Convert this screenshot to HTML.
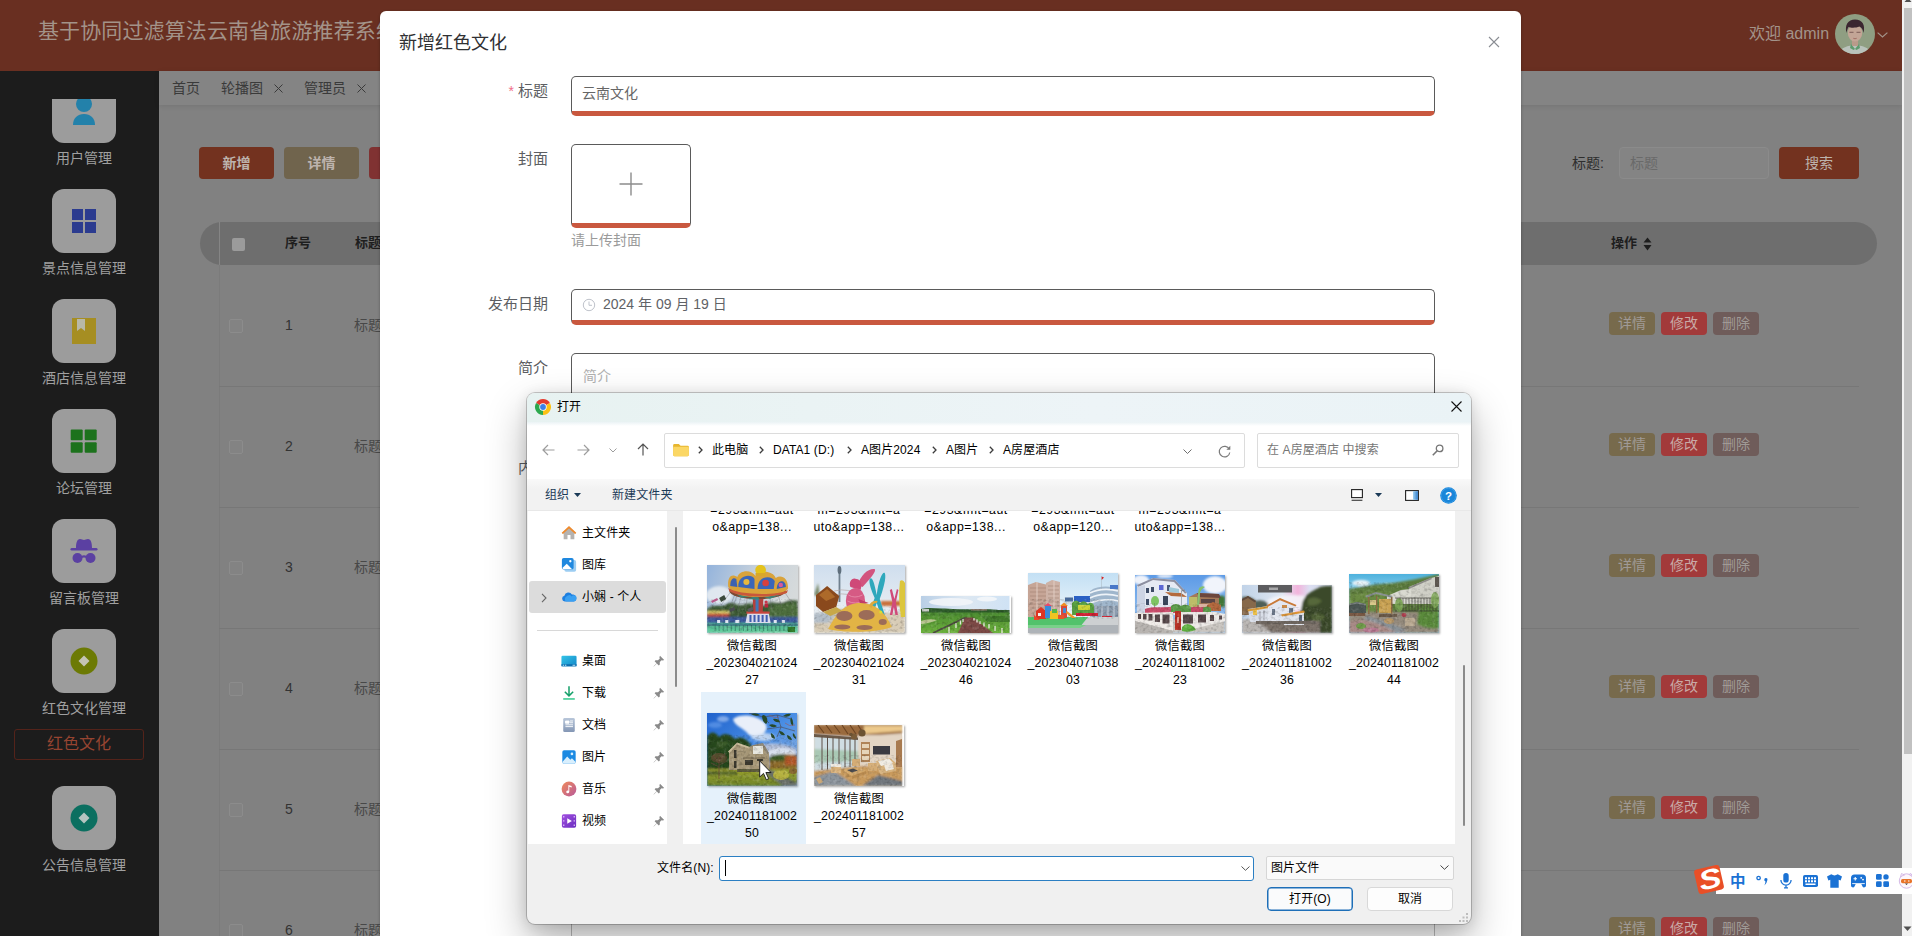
<!DOCTYPE html>
<html lang="zh-CN">
<head>
<meta charset="utf-8">
<title>基于协同过滤算法云南省旅游推荐系统</title>
<style>
*{box-sizing:border-box;margin:0;padding:0}
html,body{width:1912px;height:936px;overflow:hidden;background:#818181;font-family:"Liberation Sans","Noto Sans CJK SC",sans-serif;}
body{position:relative}
.a{position:absolute;white-space:nowrap}
svg{display:block;overflow:visible}
/* ===== page (under overlay) ===== */
#hdr{position:absolute;left:0;top:0;width:1902px;height:71px;background:#692f21;}
#hdr .ttl{position:absolute;left:38px;top:15px;font-size:21px;line-height:32px;color:#a39389;white-space:nowrap;letter-spacing:.12px}
#hdr .wel{position:absolute;left:1749px;top:20px;font-size:16px;line-height:28px;color:#a39389;white-space:nowrap}
#side{position:absolute;left:0;top:71px;width:159px;height:865px;background:#1c1c1c;}
#sidein{position:absolute;left:0;top:28px;width:158px;height:837px;overflow:hidden}
.bx{position:absolute;left:52px;width:64px;height:64px;border-radius:12px;background:#9c9c9c}
.bx svg{position:absolute;left:20px;top:20px;width:24px;height:24px}
.lb{position:absolute;left:0;width:168px;text-align:center;font-size:14px;line-height:22px;color:#a0a0a0;white-space:nowrap;margin-top:1px}
#tabs{position:absolute;left:159px;top:71px;width:1743px;height:34px;background:#848484;box-shadow:0 1px 5px rgba(0,0,0,.10)}
#tabs span{position:absolute;top:6px;font-size:14px;line-height:22px;color:#3a3a3a;white-space:nowrap}
.btn{position:absolute;height:32px;border-radius:4px;color:#bdb3ad;font-size:14px;line-height:32px;text-align:center;font-weight:bold;white-space:nowrap}
.thd{position:absolute;left:200px;top:222px;width:1677px;height:43px;border-radius:22px;background:#6e6e6e}
.thd b{position:absolute;top:11px;font-size:13px;line-height:20px;color:#1e1e1e;white-space:nowrap}
.row{position:absolute;left:219px;width:1640px;height:121px;border-bottom:1px solid #777}
.row i{position:absolute;left:10px;top:53px;width:14px;height:14px;border:1px solid #8c8c8c;border-radius:2px;background:#838383}
.row em{position:absolute;left:66px;top:48px;font-style:normal;font-size:14px;line-height:22px;color:#333}
.row u{position:absolute;left:135px;top:48px;text-decoration:none;font-size:14px;line-height:22px;color:#484848}
.row s{position:absolute;top:46px;width:46px;height:23px;border-radius:4px;text-decoration:none;font-size:14px;line-height:23px;text-align:center;color:#a09a96}
.row s.d{left:1390px;background:#776a4c}
.row s.m{left:1442px;background:#a23a3a;color:#c9a9a6}
.row s.x{left:1494px;background:#6f5c5a}
/* ===== el-dialog ===== */
#dlg{position:absolute;left:380px;top:11px;width:1141px;height:940px;background:#fff;border-radius:6px;box-shadow:0 1px 3px rgba(0,0,0,.3)}
#dlg .t{position:absolute;left:19px;top:18px;font-size:18px;line-height:28px;color:#303133;white-space:nowrap}
#dlg .l{position:absolute;left:0;width:168px;text-align:right;font-size:15px;line-height:24px;color:#5c5e62;white-space:nowrap}
#dlg .in{position:absolute;left:191px;width:864px;border:1px solid #5a5a5a;border-bottom:5px solid #c9583f;border-radius:5px;background:#fff;font-size:14px;color:#606266;white-space:nowrap}
/* ===== windows file dialog ===== */
#fd{position:absolute;left:527px;top:393px;width:944px;height:531px;border-radius:8px;background:#f0f0f0;box-shadow:0 0 0 1px rgba(0,0,0,.2),0 18px 40px rgba(0,0,0,.3),0 2px 14px rgba(0,0,0,.12);font-size:12px;color:#000;overflow:hidden;letter-spacing:.1px}
#fdsh{position:absolute;left:527px;top:393px;width:944px;height:532px;border-radius:8px;box-shadow:0 0 0 1px rgba(0,0,0,.28),0 16px 36px rgba(0,0,0,.36),0 2px 16px rgba(0,0,0,.16)}
#fd .tb{position:absolute;left:0;top:0;width:944px;height:29px;background:linear-gradient(90deg,#e7f2f1,#edf4f7 60%,#eaf3f6)}
#fd .nv{position:absolute;left:0;top:29px;width:944px;height:57px;background:linear-gradient(180deg,#ebf3f5 0,#fff 4px)}
#fd .nv>*{margin-top:-1px}
#fd .box{position:absolute;top:12px;height:35px;border:1px solid #dcdcdc;border-radius:2px;background:#fff}
#fd .cm{position:absolute;left:0;top:86px;width:944px;height:32px;background:linear-gradient(180deg,#f9f9f9 0,#f2f2f2 10px);border-bottom:1px solid #e8e8e8;color:#1b3a57}
#fd .ln{position:absolute;left:1px;top:118px;width:139px;height:333px;background:#fff}
#fd .fa{position:absolute;left:156px;top:118px;width:772px;height:333px;background:#fff;overflow:hidden}
#fd .t{position:absolute;white-space:nowrap;line-height:16px}
#fd .ni{position:absolute;left:54px;white-space:nowrap;line-height:16px}
#fd .ic{position:absolute;left:33px;width:16px;height:16px;margin-top:1px}
#fd .pin{position:absolute;left:125px;width:12px;height:12px}
#fd .fl{position:absolute;width:104px;text-align:center;line-height:17px;white-space:nowrap;font-size:12.300px;letter-spacing:.15px}
#fd svg.th{position:absolute;overflow:hidden;box-shadow:1px 1px 2px rgba(0,0,0,.35)}
</style>
</head>
<body>
<!-- PAGE -->
<div id="hdr">
  <div class="ttl">基于协同过滤算法云南省旅游推荐系统</div>
  <div class="wel">欢迎 admin</div>
  <svg class="a" style="left:1835px;top:14px" width="40" height="40" viewBox="0 0 40 40">
    <defs><clipPath id="avc"><circle cx="20" cy="20" r="20"/></clipPath></defs>
    <g clip-path="url(#avc)">
      <rect width="40" height="40" fill="#8f9e82"/>
      <path d="M3 40 C6 33 13 31.5 20 31.5 C27 31.5 34 33 37 40 Z" fill="#b9c2bb"/>
      <path d="M16 30 L20 35 L24 30 L25 34 L21.5 36 L20 35 L18.5 36 L15 34 Z" fill="#5e9a6e"/>
      <rect x="17" y="25" width="6" height="7" fill="#b99a8a"/>
      <ellipse cx="20" cy="19" rx="7.2" ry="8.6" fill="#c3a596"/>
      <path d="M11.5 19 C9.5 11 13 5.5 20 5.5 C27.5 5.5 30.5 11 28.5 19 C28 15.5 26.5 13.5 24.5 12.5 C21 14 16 14 13.5 13 C12.5 14.5 12 16.5 11.5 19 Z" fill="#3b2630"/>
      <path d="M14.5 18.3 h4 M21.5 18.3 h4" stroke="#6a4a48" stroke-width=".8"/>
      <path d="M18.3 24.3 q1.7 .9 3.4 0" stroke="#9a6258" stroke-width=".8" fill="none"/>
    </g>
  </svg>
  <svg class="a" style="left:1877px;top:32px" width="11" height="6" viewBox="0 0 11 6"><path d="M.6 .6 L5.5 5 L10.4 .6" fill="none" stroke="#a39389" stroke-width="1.2"/></svg>
</div>
<div id="side"><div id="sidein">
  <div class="bx" style="top:-20px"><svg viewBox="0 0 24 24"><circle cx="12" cy="5" r="8" fill="#2381aa"/><path d="M1 26 C1 19 5.5 15 12 15 C18.5 15 23 19 23 26 Z" fill="#2381aa"/></svg></div>
  <div class="lb" style="top:47px">用户管理</div>
  <div class="bx" style="top:89.5px"><svg viewBox="0 0 24 24"><path d="M0 0h11v11H0zM13 0h11v11H13zM0 13h11v11H0zM13 13h11v11H13z" fill="#2b3b8f"/></svg></div>
  <div class="lb" style="top:157px">景点信息管理</div>
  <div class="bx" style="top:199.5px"><svg viewBox="0 0 24 24"><path d="M0 -1h24v26H0z" fill="#a68e22"/><path d="M5 0h8v12l-4 -3l-4 3z" fill="#b8b8a8"/></svg></div>
  <div class="lb" style="top:267px">酒店信息管理</div>
  <div class="bx" style="top:309.5px"><svg viewBox="0 0 24 24"><rect x="-1.300" y=".6" width="12" height="10.600" rx="1" fill="#1c721c"/><rect x="12.700" y=".6" width="12" height="10.600" rx="1" fill="#1c721c"/><rect x="-1.300" y="13.200" width="12" height="10.600" rx="1" fill="#1c721c"/><rect x="12.700" y="13.200" width="12" height="10.600" rx="1" fill="#1c721c"/></svg></div>
  <div class="lb" style="top:377px">论坛管理</div>
  <div class="bx" style="top:419.5px"><svg viewBox="0 0 24 24"><path d="M4 9 C4 4 5 0 8 0 C10 0 10.5 1 12 1 C13.5 1 14 0 16 0 C19 0 20 4 20 9 Z" fill="#5b40a2"/><rect x="-1.5" y="9" width="27" height="2.6" rx="1.3" fill="#5b40a2"/><circle cx="5.5" cy="19" r="5" fill="#5b40a2"/><circle cx="18.500" cy="19" r="5" fill="#5b40a2"/><path d="M9 17.5 q3 -2.5 6 0 v2 q-3 -2 -6 0z" fill="#5b40a2"/></svg></div>
  <div class="lb" style="top:487px">留言板管理</div>
  <div class="bx" style="top:529.5px"><svg viewBox="0 0 24 24"><circle cx="12" cy="12" r="13.5" fill="#6c7a04"/><path d="M12 6.500 L17.500 12 L12 17.500 L6.500 12 Z" fill="#c4c4b4"/></svg></div>
  <div class="lb" style="top:597px">红色文化管理</div>
  <div class="a" style="left:14px;top:630px;width:130px;height:31px;border:1px solid #54231a;border-radius:3px;text-align:center;font-size:16px;line-height:28px;color:#964431">红色文化</div>
  <div class="bx" style="top:686.5px"><svg viewBox="0 0 24 24"><circle cx="12" cy="12" r="13.5" fill="#0b6f60"/><path d="M12 6.500 L17.500 12 L12 17.500 L6.500 12 Z" fill="#b4c4c0"/></svg></div>
  <div class="lb" style="top:754px">公告信息管理</div>
</div></div>
<div id="tabs"><span style="left:13px">首页</span><span style="left:62px">轮播图</span><span style="left:145px">管理员</span>
  <svg class="a" style="left:115px;top:13px" width="9" height="9" viewBox="0 0 9 9"><path d="M.5 .5 L8.5 8.5 M8.5 .5 L.5 8.5" stroke="#3a3a3a" stroke-width="1"/></svg>
  <svg class="a" style="left:198px;top:13px" width="9" height="9" viewBox="0 0 9 9"><path d="M.5 .5 L8.5 8.5 M8.5 .5 L.5 8.5" stroke="#3a3a3a" stroke-width="1"/></svg>
</div>
<div id="main">
  <div class="btn" style="left:199px;top:147px;width:75px;background:#73321f">新增</div>
  <div class="btn" style="left:284px;top:147px;width:75px;background:#70644d">详情</div>
  <div class="btn" style="left:369px;top:147px;width:75px;background:#803232">删除</div>
  <div class="a" style="left:1572px;top:152px;font-size:14px;line-height:22px;color:#2e2e2e">标题:</div>
  <div class="a" style="left:1619px;top:147px;width:150px;height:32px;border:1px solid #8b8b8b;border-radius:4px;background:#848484;font-size:14px;line-height:30px;padding-left:10px;color:#6a6a6a">标题</div>
  <div class="btn" style="left:1779px;top:147px;width:80px;background:#73321f;font-weight:normal">搜索</div>
  <div class="thd">
    <i class="a" style="left:32px;top:16px;width:13px;height:13px;border-radius:2px;background:#9b9b9b"></i>
    <b style="left:85px">序号</b><b style="left:155px">标题</b><b style="left:1411px">操作</b>
    <svg class="a" style="left:1443px;top:15px" width="9" height="14" viewBox="0 0 9 14"><path d="M4.500 .5 L8.500 5.500 H.5 Z M4.500 13.500 L8.500 8 H.5 Z" fill="#1e1e1e"/></svg>
    <span class="a" style="left:19px;top:0;width:1px;height:43px;background:#858585"></span>
  </div>
  <div class="a" style="left:219px;top:265px;width:1px;height:700px;background:#7b7b7b"></div>
    <div class="row" style="top:265.500px"><i></i><em>1</em><u>标题1</u><s class="d">详情</s><s class="m">修改</s><s class="x">删除</s></div>
  <div class="row" style="top:386.500px"><i></i><em>2</em><u>标题2</u><s class="d">详情</s><s class="m">修改</s><s class="x">删除</s></div>
  <div class="row" style="top:507.500px"><i></i><em>3</em><u>标题3</u><s class="d">详情</s><s class="m">修改</s><s class="x">删除</s></div>
  <div class="row" style="top:628.500px"><i></i><em>4</em><u>标题4</u><s class="d">详情</s><s class="m">修改</s><s class="x">删除</s></div>
  <div class="row" style="top:749.500px"><i></i><em>5</em><u>标题5</u><s class="d">详情</s><s class="m">修改</s><s class="x">删除</s></div>
  <div class="row" style="top:870.500px"><i></i><em>6</em><u>标题6</u><s class="d">详情</s><s class="m">修改</s><s class="x">删除</s></div>
</div>
<!-- page scrollbar -->
<div class="a" style="left:1902px;top:0;width:10px;height:936px;background:#f1f1f1"></div>
<div class="a" style="left:1904px;top:8px;width:8px;height:746px;background:#c1c1c1"></div>
<svg class="a" style="left:1904px;top:-2px" width="8" height="4" viewBox="0 0 8 4"><path d="M.5 4 L4 0 L7.500 4Z" fill="#505050"/></svg>
<svg class="a" style="left:1903px;top:926px" width="9" height="5" viewBox="0 0 9 5"><path d="M.5 .5 L4.500 5 L8.500 .5Z" fill="#505050"/></svg>
<!-- ELDIALOG -->
<div id="dlg">
  <div class="t">新增红色文化</div>
  <svg class="a" style="left:1108px;top:25px" width="12" height="12" viewBox="0 0 12 12"><path d="M1 1 L11 11 M11 1 L1 11" stroke="#8a8d93" stroke-width="1.1"/></svg>
  <div class="l" style="top:68px"><span style="color:#f0708a;margin-right:4px;font-size:14px">*</span>标题</div>
  <div class="in" style="top:65px;height:40px;line-height:33px;padding-left:10px;color:#666">云南文化</div>
  <div class="l" style="top:136px">封面</div>
  <div class="in" style="top:133px;width:120px;height:84px"></div>
  <svg class="a" style="left:239px;top:161px" width="24" height="24" viewBox="0 0 24 24"><path d="M12 .5 V23.500 M.5 12 H23.500" stroke="#8c8c8c" stroke-width="1.4"/></svg>
  <div class="a" style="left:191px;top:218px;font-size:14px;line-height:22px;color:#9a9a9a">请上传封面</div>
  <div class="l" style="top:281px">发布日期</div>
  <div class="in" style="top:278px;height:36px;line-height:29px;padding-left:31px">2024 年 09 月 19 日</div>
  <svg class="a" style="left:202px;top:287px" width="14" height="14" viewBox="0 0 14 14"><circle cx="7" cy="7" r="5.700" fill="none" stroke="#bfc3cb" stroke-width="1"/><path d="M7 3.500 V7.300 H10" fill="none" stroke="#bfc3cb" stroke-width="1"/></svg>
  <div class="l" style="top:345px">简介</div>
  <div class="in" style="top:342px;height:90px;line-height:22px;padding:11px 0 0 11px;color:#b0b0b0">简介</div>
  <div class="l" style="top:445px">内容</div>
  <div class="a" style="left:191px;top:446px;width:864px;height:500px;border:1px solid #bdbdbd;background:#fff"></div>
</div>
<!-- FILEDIALOG -->
<div id="fd">
  <div class="tb">
    <svg class="a" style="left:8px;top:5.500px" width="16" height="16" viewBox="0 0 16 16">
      <circle cx="8" cy="8" r="8" fill="#fff"/>
      <path d="M8 8 L1.070 4 A8 8 0 0 1 14.930 4 Z" fill="#e33b2e"/>
      <path d="M8 8 L14.930 4 A8 8 0 0 1 8 16 Z" fill="#fbc116"/>
      <path d="M8 8 L8 16 A8 8 0 0 1 1.070 4 Z" fill="#2da94f"/>
      <circle cx="8" cy="8" r="3.700" fill="#fff"/><circle cx="8" cy="8" r="2.900" fill="#3b7fe8"/>
    </svg>
    <div class="t" style="left:30px;top:6px">打开</div>
    <svg class="a" style="left:923.500px;top:8px" width="11" height="11" viewBox="0 0 11 11"><path d="M.5 .5 L10.500 10.500 M10.500 .5 L.5 10.500" stroke="#111" stroke-width="1.100"/></svg>
  </div>
  <div class="nv">
    <svg class="a" style="left:15px;top:23px" width="13" height="12" viewBox="0 0 13 12"><path d="M12.500 6 H1 M6 1 L1 6 L6 11" fill="none" stroke="#9d9d9d" stroke-width="1.200"/></svg>
    <svg class="a" style="left:50px;top:23px" width="13" height="12" viewBox="0 0 13 12"><path d="M.5 6 H12 M7 1 L12 6 L7 11" fill="none" stroke="#9d9d9d" stroke-width="1.200"/></svg>
    <svg class="a" style="left:82px;top:27px" width="8" height="5" viewBox="0 0 8 5"><path d="M.5 .5 L4 4 L7.500 .5" fill="none" stroke="#9d9d9d" stroke-width="1"/></svg>
    <svg class="a" style="left:109.500px;top:22px" width="12" height="13" viewBox="0 0 12 13"><path d="M6 12.500 V1 M1 6 L6 1 L11 6" fill="none" stroke="#555" stroke-width="1.200"/></svg>
    <div class="box" style="left:137px;width:581px"></div>
    <svg class="a" style="left:146px;top:22px" width="16" height="14" viewBox="0 0 18 16"><path d="M0 2.500 A1.500 1.500 0 0 1 1.500 1 H6.500 L8.500 3.200 H16.500 A1.500 1.500 0 0 1 18 4.700 V13.500 A1.500 1.500 0 0 1 16.500 15 H1.500 A1.500 1.500 0 0 1 0 13.500 Z" fill="#e7b62f"/><path d="M0 5.700 A1.500 1.500 0 0 1 1.500 4.200 H16.500 A1.500 1.500 0 0 1 18 5.700 V13.500 A1.500 1.500 0 0 1 16.500 15 H1.500 A1.500 1.500 0 0 1 0 13.500 Z" fill="#fbd765"/></svg>
    <svg class="a" style="left:170.5px;top:25px" width="5" height="8" viewBox="0 0 5 8"><path d="M.8 .8 L4 4 L.8 7.200" fill="none" stroke="#3c3c3c" stroke-width="1.300"/></svg>
    <div class="t" style="left:185px;top:21px">此电脑</div>
    <svg class="a" style="left:231.5px;top:25px" width="5" height="8" viewBox="0 0 5 8"><path d="M.8 .8 L4 4 L.8 7.200" fill="none" stroke="#3c3c3c" stroke-width="1.300"/></svg>
    <div class="t" style="left:246px;top:21px">DATA1 (D:)</div>
    <svg class="a" style="left:319.5px;top:25px" width="5" height="8" viewBox="0 0 5 8"><path d="M.8 .8 L4 4 L.8 7.200" fill="none" stroke="#3c3c3c" stroke-width="1.300"/></svg>
    <div class="t" style="left:334px;top:21px">A图片2024</div>
    <svg class="a" style="left:404.5px;top:25px" width="5" height="8" viewBox="0 0 5 8"><path d="M.8 .8 L4 4 L.8 7.200" fill="none" stroke="#3c3c3c" stroke-width="1.300"/></svg>
    <div class="t" style="left:419px;top:21px">A图片</div>
    <svg class="a" style="left:461.5px;top:25px" width="5" height="8" viewBox="0 0 5 8"><path d="M.8 .8 L4 4 L.8 7.200" fill="none" stroke="#3c3c3c" stroke-width="1.300"/></svg>
    <div class="t" style="left:476px;top:21px">A房屋酒店</div>
    <svg class="a" style="left:655.500px;top:28px" width="9" height="6" viewBox="0 0 9 6"><path d="M.5 .5 L4.500 4.500 L8.500 .5" fill="none" stroke="#6e6e6e" stroke-width="1"/></svg>
    <svg class="a" style="left:691px;top:24px" width="13" height="13" viewBox="0 0 13 13"><path d="M11.300 4.200 A5.300 5.300 0 1 0 11.800 7.500" fill="none" stroke="#7a7a7a" stroke-width="1.200"/><path d="M12.300 .8 V4.700 H8.400 Z" fill="#7a7a7a"/></svg>
    <div class="box" style="left:730px;width:202px"></div>
    <div class="t" style="left:740px;top:21px;color:#767676">在 A房屋酒店 中搜索</div>
    <svg class="a" style="left:905px;top:23px" width="12" height="12" viewBox="0 0 12 12"><circle cx="7.600" cy="4.400" r="3.300" fill="none" stroke="#777" stroke-width="1.300"/><path d="M5.200 6.800 L.8 11.200" stroke="#777" stroke-width="1.600"/></svg>
  </div>
  <div class="cm">
    <div class="t" style="left:18px;top:8px">组织</div>
    <svg class="a" style="left:47px;top:14px" width="7" height="4" viewBox="0 0 7 4"><path d="M0 0 H7 L3.500 4 Z" fill="#1b3a57"/></svg>
    <div class="t" style="left:85px;top:8px">新建文件夹</div>
    <svg class="a" style="left:824px;top:10px" width="12" height="12" viewBox="0 0 12 12"><rect x=".6" y=".6" width="10.800" height="8" fill="#fff" stroke="#222" stroke-width="1.100"/><path d="M.6 11.300 H11.400" stroke="#222" stroke-width="1.100"/></svg>
    <svg class="a" style="left:848px;top:14px" width="7" height="4" viewBox="0 0 7 4"><path d="M0 0 H7 L3.500 4 Z" fill="#1b3a57"/></svg>
    <svg class="a" style="left:878px;top:10.500px" width="14" height="11" viewBox="0 0 14 11"><defs><linearGradient id="pg" x1="0" x2="1"><stop offset="0" stop-color="#9fd0f0"/><stop offset="1" stop-color="#2f7ccc"/></linearGradient></defs><rect x=".6" y=".6" width="12.800" height="9.800" fill="#fff" stroke="#222" stroke-width="1.100"/><rect x="8" y="1.200" width="4.900" height="8.600" fill="url(#pg)"/></svg>
    <svg class="a" style="left:913px;top:8px" width="17" height="17" viewBox="0 0 17 17"><circle cx="8.500" cy="8.500" r="8.300" fill="#1a86d9"/><circle cx="8.500" cy="8.500" r="7.300" fill="none" stroke="#4aa6ec" stroke-width=".6"/><text x="8.500" y="12.500" font-size="11.500" font-weight="bold" text-anchor="middle" fill="#fff" font-family="Liberation Sans,sans-serif">?</text></svg>
  </div>
  <div class="ln">
    <div class="a" style="left:1px;top:70px;width:136.500px;height:32px;border-radius:3px;background:#dcdcdc"></div>
    <div class="a" style="left:9px;top:119px;width:121px;height:1px;background:#d8d8d8"></div>
    <svg class="a" style="left:13px;top:82px" width="6" height="10" viewBox="0 0 6 10"><path d="M1 .8 L5 5 L1 9.200" fill="none" stroke="#666" stroke-width="1.100"/></svg>
    <!-- home -->
    <svg class="ic" style="top:13px" viewBox="0 0 18 18"><path d="M9 2 L1.500 8.700 V9.500 H3 V16 H7.300 V11.300 H10.700 V16 H15 V9.500 H16.500 V8.700 Z" fill="#b5b3b1"/><path d="M9 1.200 L.8 8.600 L2.100 10 L9 3.900 L15.900 10 L17.200 8.600 Z" fill="#ee8a2d"/></svg>
    <div class="ni" style="top:14px">主文件夹</div>
    <!-- gallery -->
    <svg class="ic" style="top:45px" viewBox="0 0 18 18"><rect x="3.800" y="3.500" width="13.200" height="13.200" rx="2" fill="#9ccdf2"/><rect x="1" y="1" width="13.200" height="13.200" rx="2" fill="#1f88df"/><path d="M1.500 12.500 L6.500 7.500 L12.500 13.800 H3 A2 2 0 0 1 1.500 12.500 Z" fill="#fff"/><circle cx="10.500" cy="4.800" r="1.300" fill="#fff"/></svg>
    <div class="ni" style="top:46px">图库</div>
    <!-- onedrive -->
    <svg class="ic" style="top:77px" viewBox="0 0 18 18"><path d="M4.300 14 A3.300 3.300 0 0 1 3.800 7.500 A4.600 4.600 0 0 1 12.300 6.300 A3.900 3.900 0 0 1 14.300 14 Z" fill="#1d7fe0"/><path d="M6 14 A3 3 0 0 1 5.800 8.700 A3.800 3.800 0 0 1 12 8.300 A3 3 0 0 1 17.300 11 A3 3 0 0 1 14.500 14 Z" fill="#3aa0f2"/></svg>
    <div class="ni" style="top:78px">小娴 - 个人</div>
    <!-- desktop -->
    <svg class="ic" style="top:141px" viewBox="0 0 18 18"><defs><linearGradient id="dg" x1="0" y1="0" x2="1" y2="1"><stop offset="0" stop-color="#35c5e8"/><stop offset="1" stop-color="#1286c8"/></linearGradient></defs><rect x=".5" y="3" width="17" height="12" rx="1.500" fill="url(#dg)"/><rect x=".5" y="12.600" width="17" height="2.400" fill="#0e6fb0"/><path d="M2 13.300h1.500v1H2zM4.500 13.300h1.500v1H4.500zM13 13.300h3v1h-3z" fill="#bfe9fa"/></svg>
    <div class="ni" style="top:142px">桌面</div>
    <!-- download -->
    <svg class="ic" style="top:173px" viewBox="0 0 18 18"><path d="M9 1.500 V12 M4.300 7.500 L9 12.200 L13.700 7.500" fill="none" stroke="#16a06a" stroke-width="1.700"/><path d="M2.500 15.700 H15.500" stroke="#34c88c" stroke-width="1.700"/></svg>
    <div class="ni" style="top:174px">下载</div>
    <!-- documents -->
    <svg class="ic" style="top:205px" viewBox="0 0 18 18"><defs><linearGradient id="dcg" x1="0" y1="0" x2="0" y2="1"><stop offset="0" stop-color="#b9c7da"/><stop offset="1" stop-color="#8396b4"/></linearGradient></defs><rect x="2.500" y="1" width="13" height="16" rx="1.500" fill="url(#dcg)"/><path d="M5 4.500h4v2.500H5zM10 4.500h3.500M10 6.500h3.500M5 8.800h8.500M5 10.800h8.500" stroke="#fff" stroke-width="1" fill="#fff"/></svg>
    <div class="ni" style="top:206px">文档</div>
    <!-- pictures -->
    <svg class="ic" style="top:237px" viewBox="0 0 18 18"><rect x="1.500" y="1.500" width="15" height="15" rx="2" fill="#1c8ae2"/><path d="M1.500 14.500 L7 8.500 L10.500 12 L12.300 10.500 L16.500 14.700 A2 2 0 0 1 14.500 16.500 H3.500 A2 2 0 0 1 1.500 14.500 Z" fill="#d9effd"/><circle cx="12.300" cy="5.500" r="1.500" fill="#d9effd"/></svg>
    <div class="ni" style="top:238px">图片</div>
    <!-- music -->
    <svg class="ic" style="top:269px" viewBox="0 0 18 18"><defs><linearGradient id="mg" x1="0" y1="0" x2="1" y2="1"><stop offset="0" stop-color="#f08a5a"/><stop offset="1" stop-color="#b85a9a"/></linearGradient></defs><circle cx="9" cy="9" r="8.300" fill="url(#mg)"/><path d="M8.300 12.200 V4.500 L12 5.600 V7.200 L9.300 6.400 V12.200 A1.700 1.500 0 1 1 8.300 10.900 Z" fill="#fff"/></svg>
    <div class="ni" style="top:270px">音乐</div>
    <!-- videos -->
    <svg class="ic" style="top:301px" viewBox="0 0 18 18"><defs><linearGradient id="vg" x1="0" y1="0" x2="1" y2="1"><stop offset="0" stop-color="#a24ee0"/><stop offset="1" stop-color="#6a2fc0"/></linearGradient></defs><rect x="1" y="1.500" width="16" height="15" rx="2" fill="url(#vg)"/><path d="M7 5.800 L12.200 9 L7 12.200 Z" fill="#fff"/><path d="M2.300 3.500h1.500v1.500H2.300zM2.300 8.200h1.500v1.500H2.300zM2.300 13h1.500v1.500H2.300zM14.200 3.500h1.500v1.500h-1.500zM14.200 8.200h1.500v1.500h-1.500zM14.200 13h1.500v1.500h-1.500z" fill="#d9b8f6"/></svg>
    <div class="ni" style="top:302px">视频</div>
    <!-- pins -->
    <svg class="pin" style="top:144px" viewBox="0 0 12 12"><path d="M7 .8 L11.200 5 L9.800 5.600 L8.600 5.200 L6.800 7 L6.800 9.500 L5.800 10.400 L3.800 8.400 L.8 11.400 L.6 11.200 L3.600 8.200 L1.600 6.200 L2.500 5.200 L5 5.200 L6.800 3.400 L6.400 2.200 Z" fill="#8a8a8a"/></svg>
    <svg class="pin" style="top:176px" viewBox="0 0 12 12"><path d="M7 .8 L11.200 5 L9.800 5.600 L8.600 5.200 L6.800 7 L6.800 9.500 L5.800 10.400 L3.800 8.400 L.8 11.400 L.6 11.200 L3.600 8.200 L1.600 6.200 L2.500 5.200 L5 5.200 L6.800 3.400 L6.400 2.200 Z" fill="#8a8a8a"/></svg>
    <svg class="pin" style="top:208px" viewBox="0 0 12 12"><path d="M7 .8 L11.200 5 L9.800 5.600 L8.600 5.200 L6.800 7 L6.800 9.500 L5.800 10.400 L3.800 8.400 L.8 11.400 L.6 11.200 L3.600 8.200 L1.600 6.200 L2.500 5.200 L5 5.200 L6.800 3.400 L6.400 2.200 Z" fill="#8a8a8a"/></svg>
    <svg class="pin" style="top:240px" viewBox="0 0 12 12"><path d="M7 .8 L11.200 5 L9.800 5.600 L8.600 5.200 L6.800 7 L6.800 9.500 L5.800 10.400 L3.800 8.400 L.8 11.400 L.6 11.200 L3.600 8.200 L1.600 6.200 L2.500 5.200 L5 5.200 L6.800 3.400 L6.400 2.200 Z" fill="#8a8a8a"/></svg>
    <svg class="pin" style="top:272px" viewBox="0 0 12 12"><path d="M7 .8 L11.200 5 L9.800 5.600 L8.600 5.200 L6.800 7 L6.800 9.500 L5.800 10.400 L3.800 8.400 L.8 11.400 L.6 11.200 L3.600 8.200 L1.600 6.200 L2.500 5.200 L5 5.200 L6.800 3.400 L6.400 2.200 Z" fill="#8a8a8a"/></svg>
    <svg class="pin" style="top:304px" viewBox="0 0 12 12"><path d="M7 .8 L11.200 5 L9.800 5.600 L8.600 5.200 L6.800 7 L6.800 9.500 L5.800 10.400 L3.800 8.400 L.8 11.400 L.6 11.200 L3.600 8.200 L1.600 6.200 L2.500 5.200 L5 5.200 L6.800 3.400 L6.400 2.200 Z" fill="#8a8a8a"/></svg>
  </div>
  <!-- nav scrollbar -->
  <div class="a" style="left:147.500px;top:134px;width:2px;height:160px;background:#8b8b8b;border-radius:1px"></div>
  <!-- right scrollbar -->
  <div class="a" style="left:935.500px;top:272px;width:2px;height:161px;background:#8b8b8b;border-radius:1px"></div>
  <div class="fa">
    <svg width="0" height="0" style="position:absolute"><defs>
      <filter id="b5" x="-5%" y="-5%" width="110%" height="110%"><feGaussianBlur stdDeviation=".45"/></filter>
      <filter id="b9" x="-10%" y="-10%" width="120%" height="120%"><feGaussianBlur stdDeviation=".9"/></filter>
      <filter id="nd" x="0" y="0" width="100%" height="100%"><feTurbulence type="fractalNoise" baseFrequency=".28 .34" numOctaves="2" seed="7"/><feColorMatrix type="matrix" values="0 0 0 0 0  0 0 0 0 0  0 0 0 0 0  0 0 0 1.700 -.8"/></filter>
      <filter id="nl" x="0" y="0" width="100%" height="100%"><feTurbulence type="fractalNoise" baseFrequency=".3 .26" numOctaves="2" seed="23"/><feColorMatrix type="matrix" values="0 0 0 0 1  0 0 0 0 1  0 0 0 0 1  0 0 0 1.700 -.85"/></filter>
      <filter id="b2" x="-20%" y="-20%" width="140%" height="140%"><feGaussianBlur stdDeviation="2"/></filter>
    </defs></svg>
    <!-- clipped names of previous row -->
    <div class="fl" style="left:17px;top:-9.500px;letter-spacing:.52px">=293&amp;fmt=aut</div><div class="fl" style="left:17px;top:7.500px;letter-spacing:.52px">o&amp;app=138...</div>
    <div class="fl" style="left:124px;top:-9.500px;letter-spacing:.52px">m=293&amp;fmt=a</div><div class="fl" style="left:124px;top:7.500px;letter-spacing:.52px">uto&amp;app=138...</div>
    <div class="fl" style="left:231px;top:-9.500px;letter-spacing:.52px">=293&amp;fmt=aut</div><div class="fl" style="left:231px;top:7.500px;letter-spacing:.52px">o&amp;app=138...</div>
    <div class="fl" style="left:338px;top:-9.500px;letter-spacing:.52px">=293&amp;fmt=aut</div><div class="fl" style="left:338px;top:7.500px;letter-spacing:.52px">o&amp;app=120...</div>
    <div class="fl" style="left:445px;top:-9.500px;letter-spacing:.52px">m=293&amp;fmt=a</div><div class="fl" style="left:445px;top:7.500px;letter-spacing:.52px">uto&amp;app=138...</div>
    <div class="fl" style="left:552px;top:-12px">47</div>
    <div class="fl" style="left:659px;top:-12px">62</div>
    <!-- selected cell -->
    <div class="a" style="left:18px;top:181px;width:105px;height:153px;background:#e5f1fb"></div>
    <!-- row 1 names -->
    <div class="fl" style="left:17px;top:126.500px">微信截图<br>_202304021024<br>27</div>
    <div class="fl" style="left:124px;top:126.500px">微信截图<br>_202304021024<br>31</div>
    <div class="fl" style="left:231px;top:126.500px">微信截图<br>_202304021024<br>46</div>
    <div class="fl" style="left:338px;top:126.500px">微信截图<br>_202304071038<br>03</div>
    <div class="fl" style="left:445px;top:126.500px">微信截图<br>_202401181002<br>23</div>
    <div class="fl" style="left:552px;top:126.500px">微信截图<br>_202401181002<br>36</div>
    <div class="fl" style="left:659px;top:126.500px">微信截图<br>_202401181002<br>44</div>
    <!-- row 2 names -->
    <div class="fl" style="left:17px;top:279.500px">微信截图<br>_202401181002<br>50</div>
    <div class="fl" style="left:124px;top:279.500px">微信截图<br>_202401181002<br>57</div>
    <!-- 1 swing carousel -->
    <svg class="th" style="left:24px;top:54px" width="91" height="68" viewBox="0 0 90 68" preserveAspectRatio="none">
      <defs><linearGradient id="t1s" x1="0" y1="0" x2="1" y2=".3"><stop offset="0" stop-color="#93b3dc"/><stop offset=".5" stop-color="#c4d0dc"/><stop offset="1" stop-color="#d6dadb"/></linearGradient>
      <linearGradient id="t1w" x1="0" y1="0" x2="0" y2="1"><stop offset="0" stop-color="#4aa88c"/><stop offset="1" stop-color="#66d6a0"/></linearGradient></defs>
      <rect width="90" height="68" fill="url(#t1s)"/>
      <g filter="url(#b9)">
        <ellipse cx="12" cy="30" rx="13" ry="9" fill="#eef1f4" opacity=".8"/>
        <ellipse cx="78" cy="40" rx="14" ry="6" fill="#e8ecee" opacity=".8"/>
        <path d="M0 44 C6 38 12 42 18 40 C24 34 30 42 36 40 C44 36 50 42 58 40 C64 34 72 40 78 36 C84 34 88 36 90 36 V56 H0 Z" fill="#3e5a36"/>
        <path d="M60 44 C66 38 74 40 80 38 C86 36 88 40 90 40 V54 H60 Z" fill="#4e6e3c"/>
        <rect x="0" y="46" width="22" height="3" fill="#d8d06a"/><rect x="0" y="48.500" width="22" height="3" fill="#c4483c"/>
        <rect x="0" y="52" width="90" height="8" fill="#3d589c"/>
        <rect x="0" y="58" width="90" height="10" fill="url(#t1w)"/>
      </g>
      <g filter="url(#b5)">
        <path d="M8 60 V66 M12 60 V66 M16 60 V66 M20 60 V66 M24 60 V66 M28 60 V66 M32 60 V66 M36 60 V66 M40 60 V66 M44 60 V66 M48 60 V66 M52 60 V66 M56 60 V66 M60 60 V66 M64 60 V66 M68 60 V66 M72 60 V66 M76 60 V66 M80 60 V66 M84 60 V66" stroke="#2e6a5a" stroke-width=".6"/>
        <path d="M0 60 H90" stroke="#2b4a7c" stroke-width=".8"/>
        <rect x="80" y="62" width="7" height="5" fill="#2f7a2a"/>
        <path d="M10 55h3v3h-3zM18 55h3v3h-3zM28 55h4v3h-4zM66 55h3v3h-3zM74 55h3v3h-3z" fill="#dfe6f2"/>
     <rect x="0" y="34" width="90" height="34" filter="url(#nd)" opacity=".3"/><rect x="0" y="34" width="90" height="34" filter="url(#nl)" opacity=".24"/>
         <!-- chains -->
        <path d="M24 26 L14 40 M28 28 L22 44 M34 30 L30 46 M40 31 L38 46 M62 31 L64 44 M70 29 L74 42 M76 26 L84 38 M30 29 L26 42" stroke="#6a6a72" stroke-width=".35"/>
        <!-- column & base -->
        <path d="M45 28 H56 L55 50 H46 Z" fill="#b4403c"/><path d="M48 28 H51 V50 H48 Z" fill="#3e78b8"/>
        <path d="M40 48 H61 L63 58 H38 Z" fill="#d9dcec"/><path d="M42 50h2v7h-2zM46 50h2v7h-2zM50 50h2v7h-2zM54 50h2v7h-2zM58 50h2v7h-2z" fill="#3f5cb0"/><rect x="39" y="46.500" width="23" height="2.200" fill="#c8443c"/>
        <!-- canopy -->
        <ellipse cx="50" cy="26" rx="28" ry="8" fill="#7a4a34"/>
        <path d="M50 30 L26 26 L34 33 Z M50 30 L40 34 L52 35 Z M50 30 L62 34 L72 30 Z" fill="#2f8f86" opacity=".8"/>
        <path d="M21 22 C20 12 24 8 30 12 C32 5 44 4 48 11 C52 4 66 6 68 13 C74 9 81 14 80 24 C74 30 62 32 50 32 C38 32 26 30 21 22 Z" fill="#d9a33a"/>
        <path d="M23 21 C23 14 26 12 29 14 L30 22 Z" fill="#3d62b2"/>
        <path d="M31 22 C30 10 44 8 47 14 L47 24 Z" fill="#3a66b8"/>
        <path d="M50 24 C50 10 64 10 67 16 L66 24 Z" fill="#3a66b8"/>
        <path d="M69 24 C69 14 78 14 78 22 Z" fill="#3d62b2"/>
        <circle cx="39" cy="17" r="3" fill="#e8b83c"/><circle cx="58" cy="18" r="3.300" fill="#d8403c"/><circle cx="73" cy="20" r="2.200" fill="#d8589c"/>
        <path d="M21 23 C30 30 70 31 80 25 L79 28 C68 33 32 33 22 26 Z" fill="#c8583a"/>
        <circle cx="53" cy="5" r="5.300" fill="#e4c21c"/><path d="M48 8 h10 v3 h-10z" fill="#d8a82c"/>
        <!-- riders -->
        <circle cx="58.500" cy="37" r="1.600" fill="#c8344a"/><path d="M57 38.500h3.500v4H57z" fill="#b8283c"/>
        <path d="M4 36 l6 -3 l1 2 l-6 3z" fill="#b85a8a"/><path d="M12 33 l5 -3 l2 4 l-5 3z" fill="#3a4a3a"/><path d="M22 44 l5 -2 l1 3 l-5 2z" fill="#4a4a52"/><path d="M40 44 l5 -2 l1 3 l-5 2z" fill="#5a5a62"/>
      </g>
    </svg>
    <!-- 2 rabbits -->
    <svg class="th" style="left:131px;top:54px" width="91" height="68" viewBox="0 0 90 68" preserveAspectRatio="none">
      <defs><linearGradient id="t2s" x1="0" y1="0" x2="0" y2="1"><stop offset="0" stop-color="#cfdeee"/><stop offset=".7" stop-color="#e9eef2"/></linearGradient></defs>
      <rect width="90" height="68" fill="url(#t2s)"/>
      <g filter="url(#b9)">
        <rect x="0" y="48" width="90" height="20" fill="#d8ccb6"/>
        <path d="M0 48 H24 L14 58 H0 Z" fill="#b4bec8"/>
        <path d="M18 44 h50 v8 h-50z" fill="#c9c4b0"/>
        <path d="M66 36 h24 v5 h-24z" fill="#c8703a"/>
        <path d="M0 30 l4 -12 l2 14z" fill="#7a8a6a"/>
      </g>
      <g filter="url(#b5)">
        <path d="M24.300 3 h1.800 v34 h-1.800z" fill="#70808e"/><ellipse cx="25.200" cy="5" rx="1.900" ry="4" fill="#5e6e7c"/>
        <path d="M20 26 q14 -4 30 6 M20 30 q14 -4 30 6" stroke="#b8a8a8" stroke-width=".7" fill="none"/>
     <rect x="0" y="40" width="90" height="28" filter="url(#nd)" opacity=".3"/><rect x="0" y="40" width="90" height="28" filter="url(#nl)" opacity=".24"/>
         <!-- hat -->
        <path d="M2 30 L13 21 L25 31 L22 42 L9 47 L2 41 Z" fill="#8a4a1e"/><path d="M5 30 L13 24 L21 32 L12 36 Z" fill="#ad6a2c"/><path d="M9 47 L22 42 L28 46 L16 51 Z" fill="#c8a84a"/>
        <!-- pink rabbit -->
        <path d="M43 20 C46 10 54 3 60 4 C62 6 56 13 48 22 Z" fill="#d2527e"/>
        <path d="M36 22 C34 16 38 12 42 14 C46 14 48 20 46 25 Z" fill="#cf4a78"/>
        <ellipse cx="41" cy="36" rx="9.500" ry="13" fill="#d65a84"/>
        <path d="M34 30 q6 4 14 0 M33 36 q8 4 16 0 M34 42 q7 3 14 0" stroke="#e890ac" stroke-width=".8" fill="none"/>
        <path d="M44 34 L54 38 L46 40 Z" fill="#c03c6a"/>
        <!-- teal rabbit -->
        <path d="M55 14 C57 12 59 14 62 30 C64 14 68 6 70 8 C72 12 68 26 65 34 L70 50 H66 L62 38 L58 50 H54 L60 33 C57 26 54 18 55 14 Z" fill="#2fa8bc"/>
        <!-- small pink + yellow -->
        <path d="M77 24 l2.500 10 l2.500 -10 l1.500 1 l-2.500 12 l2 13 h-2.500 l-1.500 -8 l-1.500 8 h-2.500 l2.500 -13 l-2.500 -12z" fill="#d04c7a"/>
        <path d="M85 16 q3 -2 5 2 v34 h-4 q-3 -18 -1 -36z" fill="#dcc63c"/>
        <!-- giraffe mound -->
        <path d="M14 64 C24 44 34 38 46 38 C60 38 70 46 77 62 C60 68 30 68 14 64 Z" fill="#e2b444"/>
        <path d="M54 41 q3 -6 9 -5 l-1 2 q-4 0 -5 5z" fill="#dcaa3c"/>
        <ellipse cx="30" cy="51" rx="8" ry="5" fill="#9c6c58"/><ellipse cx="52" cy="50" rx="8" ry="5" fill="#9c6c58"/>
        <ellipse cx="28" cy="62" rx="8" ry="2.400" fill="#9c6c58"/><ellipse cx="50" cy="62.500" rx="8" ry="2.400" fill="#9c6c58"/><ellipse cx="68" cy="57" rx="4" ry="3" fill="#9c6c58"/>
        <circle cx="66" cy="47" r="1.500" fill="#d8e030"/>
      </g>
    </svg>
    <!-- 3 field boardwalk -->
    <svg class="th" style="left:238px;top:85px;background:#fff" width="90" height="37" viewBox="0 0 90 37" preserveAspectRatio="none">
      <defs><linearGradient id="t3s" x1="0" y1="0" x2="1" y2="0"><stop offset="0" stop-color="#b9cfe6"/><stop offset=".5" stop-color="#dde8f2"/><stop offset="1" stop-color="#cfe2f4"/></linearGradient>
      <linearGradient id="t3g" x1="0" y1="0" x2="0" y2="1"><stop offset="0" stop-color="#4b8a30"/><stop offset="1" stop-color="#6cb23c"/></linearGradient></defs>
      <rect width="88.500" height="37" fill="url(#t3s)"/>
      <g filter="url(#b5)">
        <ellipse cx="30" cy="6" rx="22" ry="4" fill="#f2f5f8" opacity=".9"/><ellipse cx="66" cy="3" rx="10" ry="2.500" fill="#f4f7fa" opacity=".9"/>
        <path d="M0 13 C8 11 16 13 24 12.500 C34 13.500 44 13 54 13.500 C62 12.500 70 13.500 78 14 L88.500 14 V18 H0 Z" fill="#2f5c2c"/>
        <path d="M50 13 h16 v1.600 h-16z" fill="#8a7a6a"/><path d="M1 13 h7 v2.500 h-7z" fill="#c8ccc8"/>
        <rect x="0" y="16.500" width="88.500" height="20.500" fill="url(#t3g)"/>
        <path d="M0 25 q8 -3 16 -1 q-6 3 -16 4z" fill="#b9c690"/>
        <path d="M60 20 h28.500 v6 h-22z" fill="#3f7a2c"/>
        <path d="M44 21.500 H52 L72 37 H37 Z" fill="#7c4a44"/>
        <path d="M44.500 21.500 L12 37" stroke="#4e4c40" stroke-width="1.800"/>
        <path d="M42 23 v3 M39.500 24.500 v4 M35 27 v5 M28 31 v6" stroke="#e8e8dc" stroke-width="1.300"/>
        <path d="M53 22 v2.500 M56 23.500 v3 M59 25 v3 M63 26.500 v4 M68 28 v4.500 M74 30 v5 M81 32 v5" stroke="#eeeee4" stroke-width="1.300"/>
      </g>
      <rect x="0" y="13" width="88.5" height="24" filter="url(#nd)" opacity=".3"/><rect x="0" y="13" width="88.5" height="24" filter="url(#nl)" opacity=".24"/>
    </svg>
    <!-- 4 kindergarten -->
    <svg class="th" style="left:345px;top:62px" width="90" height="60" viewBox="0 0 90 60" preserveAspectRatio="none">
      <defs><linearGradient id="t4s" x1="0" y1="0" x2="0" y2="1"><stop offset="0" stop-color="#c3e0f4"/><stop offset=".6" stop-color="#e6f2fa"/></linearGradient></defs>
      <rect width="90" height="60" fill="url(#t4s)"/>
      <g filter="url(#b5)">
        <path d="M0 12 L8 9 L20 12 V44 H0 Z" fill="#c6a596"/><path d="M18 10 L24 7 L32 9 V42 H18 Z" fill="#cdb2a6"/>
        <path d="M2 15h16 M2 19h16 M2 23h16 M2 27h16 M2 31h16 M2 35h16 M20 13h11 M20 17h11 M20 21h11 M20 25h11 M20 29h11 M20 33h11" stroke="#a88878" stroke-width=".7"/>
        <path d="M9 9 v35 M26 8 v34" stroke="#e0ccc2" stroke-width="1"/>
        <path d="M36 24 h30 v8 h-30z" fill="#d9e6ee"/><path d="M46 23 h20 v6 h-20z" fill="#2c60c4"/><path d="M37 24.500 h8 v4 h-8z" fill="#4a6a9a"/>
        <path d="M62 18 C70 12 84 13 90 16 V46 H62 Z" fill="#9fb6cc"/><path d="M62 20 C72 15 84 16 90 18 M62 25 C72 20 84 21 90 23 M62 30 C72 26 84 26 90 28" stroke="#eef3f8" stroke-width="1.600" fill="none"/><path d="M64 33 h26 v11 h-26z" fill="#8c9cae"/><path d="M68 33 v11 M74 33 v11 M80 33 v11 M86 33 v11" stroke="#d4dce4" stroke-width=".8"/>
        <path d="M82 12 h8 v4 h-8z" fill="#4a78c8"/>
        <path d="M73.500 3 V16" stroke="#a0a8b0" stroke-width=".4"/><path d="M73.700 3.500 l2.300 1 l-2.300 2.500z" fill="#d82828"/>
        <path d="M44 30 q4 -5 8 0 q4 -4 8 1 q3 -3 6 1 v10 h-22z" fill="#58a040"/><path d="M50 32 h12 v5 h-12z" fill="#ccd434"/>
        <path d="M48 40 h22 v3 h-22z" fill="#d22434"/><path d="M74 43 h10 v1.500 h-10z" fill="#d22434"/>
        <rect x="0" y="44" width="62" height="10" fill="#52c26c"/><path d="M60 44 H90 V54 H52 Z" fill="#cdd0d2"/><rect x="0" y="52" width="90" height="8" fill="#aeb3b8"/><path d="M0 52 H58 L52 55 H0 Z" fill="#7ad08a"/>
     <rect x="0" y="26" width="90" height="20" filter="url(#nd)" opacity=".3"/><rect x="0" y="26" width="90" height="20" filter="url(#nl)" opacity=".24"/>
         <!-- playground -->
        <path d="M8 38 l5 -4 l5 4 v8 h-10z" fill="#de3424"/><path d="M10 40 h3 v3 h-3z" fill="#f4f0ea"/><path d="M6 42 l6 5 h-6z" fill="#e8482c"/>
        <path d="M16 33 l4 -3 l4 3z" fill="#e84868"/><path d="M17 33 h6 v12 h-6z" fill="#3a8ad8"/><path d="M22 38 h8 v8 h-8z" fill="#f0c424"/><path d="M24 36 h5 v4 h-5z" fill="#58b848"/>
        <path d="M32 33 l4 -3.500 l4 3.500z" fill="#f08a24"/><path d="M33 33 h6 v12 h-6z" fill="#d84a3a"/><path d="M35 35 h3 v5 h-3z" fill="#4a8ad0"/>
        <path d="M39 38 l9 7 h-4 l-6 -5z" fill="#f09a2a"/><path d="M30 42 h6 v4 h-6z" fill="#e8542c"/>
      </g>
    </svg>
    <!-- 5 white house -->
    <svg class="th" style="left:452px;top:64px" width="90" height="58" viewBox="0 0 90 58" preserveAspectRatio="none">
      <defs><linearGradient id="t5s" x1="0" y1="0" x2="0" y2="1"><stop offset="0" stop-color="#5c9ae6"/><stop offset="1" stop-color="#a8cdf2"/></linearGradient></defs>
      <rect width="90" height="58" fill="url(#t5s)"/>
      <g filter="url(#b9)">
        <ellipse cx="80" cy="10" rx="12" ry="9" fill="#f1f4fb"/><ellipse cx="6" cy="5" rx="8" ry="5" fill="#eef2fa"/><ellipse cx="30" cy="1" rx="8" ry="2" fill="#dbe6f6"/>
        <path d="M82 22 q5 -3 8 0 v10 h-8z" fill="#3f7434"/>
        <rect x="0" y="44" width="90" height="14" fill="#c9c5c0"/>
      </g>
      <g filter="url(#b5)">
        <path d="M2 10 L18 3 L40 5 L52 18 V40 H2 Z" fill="#e6eaf3"/><path d="M2 10 L18 3 L40 5 L52 18 L50 18.500 L39 7 L18 5 L3 12 Z" fill="#8d8fa0"/>
        <path d="M2 12 v28 h8 v-30z" fill="#cdd4e4"/>
        <path d="M11 13 h3 v5 h-3z M16 12 h3 v5 h-3z M11 24 h3 v6 h-3z" fill="#3e4c66"/><path d="M24 10 h4.500 v5 h-4.500z" fill="#5c68d4"/>
        <path d="M32 10 h3 v6 h-3z" fill="#4a5a78"/><path d="M28 21 h5 v9 h-5z" fill="#3a465c"/>
        <path d="M30 17 L46 18 L52 22 L36 21 Z" fill="#b46a3c"/><path d="M34 12 L44 14 V18 L34 17 Z" fill="#9fc8d8"/>
        <path d="M28 30 L44 30 L50 33 L34 33 Z" fill="#dfe4ee"/>
        <path d="M54 22 L62 18 L84 19 V36 H54 Z" fill="#a47858"/><path d="M62 18 L84 19 L86 23 L64 22 Z" fill="#6c463c"/><path d="M54 22 h8 v10 h-8z" fill="#bcbc68"/><path d="M66 24 h14 v4 h-14z" fill="#5a4444"/><path d="M64 29 h20 v3 h-20z" fill="#d9b0a0"/>
        <path d="M72 30 l6 -3 l8 3 v6 h-14z" fill="#b4683c"/>
        <path d="M62 30 q1 -14 2 -17 q3 -3 6 -1 q-4 2 -5 6 q0 8 -1 12z" fill="#86c070"/>
        <ellipse cx="20" cy="26" rx="4" ry="5" fill="#7ec464"/><path d="M19.500 28 v8" stroke="#6a8a5a" stroke-width=".6"/>
        <path d="M46 16 h.8 v22 h-.8z" fill="#9aa0a8"/><path d="M46 16 l4 -1" stroke="#70747c" stroke-width=".7"/>
        <path d="M10 34 C18 31 26 33 34 32 C42 31 50 33 58 32 C64 31 70 33 74 33 V38 H10 Z" fill="#c84868"/>
        <path d="M36 31 q5 -4 10 0 q5 -3 10 1 v5 h-20z M68 33 q4 -3 8 0 v4 h-8z" fill="#5c9c48"/>
        <path d="M0 38 L38 37 V56 L0 46 Z" fill="#f0ece8"/><path d="M46 37 L80 37 L90 39 V46 L62 53 L46 54 Z" fill="#ece9e6"/>
        <path d="M3 39 h3 v5 h-3z M8 39 h3.500 v5.500 h-3.500z M13.500 39 h4 v6.500 h-4z M20 39.500 h5 v7.500 h-5z M27.500 39.500 h7 v9 h-7z" fill="#57474a"/>
        <path d="M48 39.500 h10 v9 h-10z M63 39.500 h8 v8 h-8z M75 40 h4 v6 h-4z M84 40.500 h3 v4 h-3z" fill="#57474a"/>
        <path d="M40 36 h6 v19 h-6z" fill="#b83028"/><path d="M42 42 h2 v6 h-2z" fill="#e0a090"/>
        <path d="M47 52 q5 -6 12 0 l2 3 q-8 3 -14 1z" fill="#5eb040"/>
        <path d="M0 46 L38 56 V58 H0 Z" fill="#b8b4b0"/>
      </g>
      <rect x="0" y="28" width="90" height="30" filter="url(#nd)" opacity=".3"/><rect x="0" y="28" width="90" height="30" filter="url(#nl)" opacity=".24"/>
    </svg>
    <!-- 6 sunset house -->
    <svg class="th" style="left:559px;top:74px" width="90" height="48" viewBox="0 0 90 48" preserveAspectRatio="none">
      <defs><linearGradient id="t6s" x1="0" y1="0" x2="1" y2="0"><stop offset="0" stop-color="#c1d3e8"/><stop offset=".45" stop-color="#dfe6f2"/><stop offset=".62" stop-color="#f2b4dc"/><stop offset=".75" stop-color="#dcdff2"/><stop offset="1" stop-color="#c8d0e0"/></linearGradient></defs>
      <rect width="90" height="48" fill="url(#t6s)"/>
      <g filter="url(#b9)">
        <ellipse cx="50" cy="18" rx="26" ry="8" fill="#f4f4fa" opacity=".9"/>
        <path d="M0 12 q8 -2 14 4 q6 -2 12 2 v8 h-26z" fill="#4f5e56"/>
        <path d="M60 20 C62 8 72 6 78 2 C84 0 88 2 90 0 V48 H66 C58 40 58 28 60 20 Z" fill="#3b4a2c"/>
        <path d="M66 14 q8 -4 14 2 q-6 6 -14 4z M70 30 q8 -3 14 3 q-8 5 -14 2z" fill="#56683a"/>
        <rect x="0" y="36" width="78" height="12" fill="#7c726a"/>
        <path d="M0 34 H12 L30 48 H0 Z" fill="#b9b5b2"/>
      </g>
      <g filter="url(#b5)">
        <rect x="16" y="0" width="34" height="7.500" fill="#5c5c5e"/><path d="M27 2.500 h9 v2.500 h-9z" fill="#a8a8aa"/>
        <path d="M0 14 L6 11 L14 16 V30 H0 Z" fill="#87694c"/><path d="M0 14 L6 11 L14 16 L13 17.500 L6 13 L0 16 Z" fill="#5e4a3c"/>
        <path d="M6 24 L26 21 V37 H8 Z" fill="#d9dee8"/><path d="M5 24.500 L26 21 L27 23 L6 26.500 Z" fill="#d89a38"/><path d="M11 25 h4 v5 h-4z" fill="#ecc04a"/><path d="M18 26 v10 M22 25.500 v10" stroke="#8a8a92" stroke-width=".7"/>
        <path d="M26 20 L38 14 L53 20 V38 H26 Z" fill="#e3e7f0"/><path d="M24.500 20.500 L38 13 L54.500 20 L53.500 21.500 L38 15.300 L25.500 22 Z" fill="#c97a38"/>
        <path d="M40 20 h5 v3 h-5z" fill="#c88a4a"/><path d="M47 23 h4 v6 h-4z M30 24 h3 v6 h-3z" fill="#6a7688"/>
        <path d="M40 29 L62 26 V40 H42 Z" fill="#dfe3ec"/><path d="M39 29.500 L62 25.500 L63 27.500 L40 31.500 Z" fill="#dc9434"/><path d="M57 30 h3 v9 h-3z" fill="#5c6a7c"/>
        <path d="M14 36 h60 v3 h-60z" fill="#6e665e"/>
      </g>
      <rect x="0" y="22" width="90" height="26" filter="url(#nd)" opacity=".3"/><rect x="0" y="22" width="90" height="26" filter="url(#nl)" opacity=".24"/>
    </svg>
    <!-- 7 garden -->
    <svg class="th" style="left:666px;top:63px" width="90" height="59" viewBox="0 0 90 59" preserveAspectRatio="none">
      <defs><linearGradient id="t7s" x1="0" y1="0" x2="0" y2="1"><stop offset="0" stop-color="#4eb2de"/><stop offset=".35" stop-color="#9ad4ec"/></linearGradient></defs>
      <rect width="90" height="59" fill="url(#t7s)"/>
      <g filter="url(#b9)">
        <ellipse cx="12" cy="9" rx="9" ry="3" fill="#eaf4fa"/>
        <path d="M0 15 C14 12 28 10 44 9 C58 7 74 4 90 0 V40 H0 Z" fill="#5c7c3c"/>
        <path d="M0 20 C14 18 30 16 44 18 V40 H0 Z" fill="#6b8a42"/>
        <rect x="0" y="38" width="90" height="21" fill="#948a7c"/>
        <path d="M70 34 q10 -2 20 2 v18 q-12 2 -22 -4z" fill="#5a8a3a"/>
        <path d="M0 48 q12 -4 24 0 q10 4 30 6 v5 h-54z" fill="#a88a86"/>
        <path d="M18 42 q16 4 40 14 l-10 3 q-16 -10 -34 -14z" fill="#8a9298"/>
      </g>
      <g filter="url(#b5)">
        <path d="M60 13 L82 4 L90 2 V30 H60 Z" fill="#cfcfc6"/><path d="M59 13.500 L82 3.500 L83 5 L60 15 Z" fill="#8c8c88"/><path d="M86 3 h4 v10 h-4z" fill="#5c5650"/>
        <path d="M38 22 L52 16 L62 15 V30 H38 Z" fill="#d9d9d0"/>
        <path d="M16 22 L27 18 L44 22 L42 23.500 L27 20 L18 23.500 Z" fill="#8a9292"/>
        <path d="M19 23 h1.500 v17 h-1.500z M27 22 h1.300 v17 h-1.300z M42 23 h1.500 v17 h-1.500z" fill="#8c6c44"/>
        <path d="M30 25 h12 v14 h-12z" fill="#c9a252"/><path d="M21 26 h6 v5 h-6z" fill="#d9c88a"/>
        <path d="M0 30 L8 28 L17 30 V39 H0 Z" fill="#4c5652"/><path d="M0 30 L8 28 L17 30 L17 31.500 L8 29.500 L0 31.500 Z" fill="#7a8280"/>
        <path d="M0 39 h16 v3 h-16z" fill="#7a5a44"/>
        <path d="M46 24 H90 M46 37 H90" stroke="#34342e" stroke-width=".7"/>
        <path d="M48 24 v13 M51 24 v13 M54 24 v13 M57 24 v13 M60 24 v13 M63 24 v13 M66 24 v13 M69 24 v13 M72 24 v13 M75 24 v13 M78 24 v13 M81 24 v13 M84 24 v13 M87 24 v13" stroke="#3a3a34" stroke-width=".6"/>
        <ellipse cx="50" cy="31" rx="4" ry="7" fill="#7aa452" opacity=".9"/><ellipse cx="86" cy="26" rx="4" ry="8" fill="#7aa452" opacity=".85"/>
        <path d="M30 40 h18 v3 h-18z" fill="#6a5a48"/><ellipse cx="40" cy="47" rx="5" ry="3" fill="#b89868"/><ellipse cx="55" cy="41" rx="2.500" ry="2" fill="#a83c4c"/>
        <path d="M56 44 h10 v8 h-10z" fill="#b8a890"/>
        <ellipse cx="12" cy="52" rx="5" ry="3" fill="#6e9a4a"/><ellipse cx="22" cy="56" rx="8" ry="2.500" fill="#b87a92"/>
      </g>
      <rect x="0" y="8" width="90" height="51" filter="url(#nd)" opacity=".3"/><rect x="0" y="8" width="90" height="51" filter="url(#nl)" opacity=".24"/>
    </svg>
    <!-- 8 villa blue sky (selected) -->
    <svg class="th" style="left:24px;top:202px" width="90" height="73" viewBox="0 0 90 73" preserveAspectRatio="none">
      <defs><linearGradient id="t8s" x1="0" y1="0" x2="1" y2="1"><stop offset="0" stop-color="#1f62cc"/><stop offset=".5" stop-color="#4a8ee4"/><stop offset="1" stop-color="#9ab6dc"/></linearGradient>
      <linearGradient id="t8g" x1="0" y1="0" x2="0" y2="1"><stop offset="0" stop-color="#9aa02e"/><stop offset="1" stop-color="#6e8428"/></linearGradient></defs>
      <rect width="90" height="73" fill="url(#t8s)"/>
      <g filter="url(#b9)">
        <path d="M26 6 C34 0 50 2 58 10 C64 18 52 26 42 22 C36 14 28 14 26 6 Z" fill="#e9eff9"/><ellipse cx="16" cy="6" rx="6" ry="3" fill="#7fa8e8"/><ellipse cx="56" cy="24" rx="12" ry="4" fill="#dfe8f6" opacity=".75"/><ellipse cx="8" cy="12" rx="7" ry="3" fill="#5b93e6" opacity=".8"/>
        <path d="M46 34 C58 28 80 30 90 36 V54 H60 C54 46 50 40 46 34 Z" fill="#aebcd8"/><ellipse cx="74" cy="40" rx="14" ry="5" fill="#d8e0ee"/>
        <path d="M0 24 C4 16 10 20 12 24 C18 18 24 22 28 26 C34 22 40 26 44 32 L46 58 H0 Z" fill="#27461f"/>
        <path d="M10 30 q6 -4 12 0 q-4 6 -12 4z" fill="#3a5c2a"/>
        <path d="M62 46 C68 42 78 40 90 42 V58 H62 Z" fill="#8c6a2a"/><path d="M78 44 q6 -2 12 0 v8 h-12z" fill="#b4582a"/><path d="M62 44 q8 -4 16 -2 v6 h-16z" fill="#3c5a26"/>
        <rect x="0" y="56" width="90" height="17" fill="url(#t8g)"/>
        <path d="M56 58 L64 57 L90 70 V73 H76 Z" fill="#686e66"/>
        <path d="M0 58 h30 v4 h-30z" fill="#5a6a2a"/>
      </g>
      <g filter="url(#b5)">
        <path d="M42 0 L56 4 L62 10 M56 4 L70 2 L84 6 M70 2 L74 14 L70 24 M60 16 L74 14 L88 18" stroke="#4a3a30" stroke-width=".5" fill="none"/>
        <path d="M44 1 q5 -2 9 1 q-5 2 -9 -1z M55 3 q2 -3 5 2 q1 5 -1 6 q-4 -3 -4 -8z M62 12 q4 -2 8 1 q-4 3 -8 -1z M76 3 q4 -3 8 -2 q-2 4 -8 2z M84 4 q3 4 2 9 q-4 -3 -2 -9z M72 18 q4 0 6 4 q-5 1 -6 -4z M64 20 q4 2 4 6 q-5 -1 -4 -6z M80 22 q4 1 5 5 q-5 0 -5 -5z M66 6 q5 -1 7 3 q-5 1 -7 -3z M86 20 q3 2 3 6 q-4 -2 -3 -6z" fill="#28482a"/>
        <path d="M62 2 q6 4 10 2 M78 10 q4 4 10 2" stroke="#9a5a5a" stroke-width=".6" fill="none"/>
        <path d="M22 38 L30 30 L42 34 L46 32 L58 33 L62 41 V57 H22 Z" fill="#a59676"/>
        <path d="M21 38.500 L30 29.500 L43 34 L42 35.500 L30 31.500 L22.500 40 Z" fill="#c9bc9a"/>
        <path d="M46 32 L56 30 L62 40 L60 41 L55 33 L46 34 Z" fill="#8a8270"/><path d="M46 33 h10 v8 h-10z" fill="#e7e7df"/>
        <path d="M27 37 h2.500 v8 h-2.500z M27 48 h2.500 v7 h-2.500z M38 47 h8 v5 h-8z M50 44 h6 v4 h-6z" fill="#3a382e"/>
        <path d="M36 44 h22 v2 h-22z" fill="#8a7c60"/>
        <path d="M12 66 V44 M12 50 L6 42 M12 48 L18 40 M12 54 L4 50 M12 52 L20 48" stroke="#6a463a" stroke-width=".7" fill="none"/>
        <ellipse cx="12" cy="45" rx="8" ry="5" fill="#7a4e3c" opacity=".55"/>
        <ellipse cx="74" cy="62" rx="8" ry="5" fill="#b6b240"/><ellipse cx="86" cy="58" rx="4" ry="3" fill="#8a6a30"/>
        <path d="M30 56 h28 v3 h-28z" fill="#5c5a3a"/>
      </g>
      <rect x="0" y="22" width="90" height="51" filter="url(#nd)" opacity=".3"/><rect x="0" y="22" width="90" height="51" filter="url(#nl)" opacity=".24"/>
    </svg>
    <!-- 9 interior -->
    <svg class="th" style="left:131px;top:214px;background:#fff" width="90" height="61" viewBox="0 0 90 61" preserveAspectRatio="none">
      <rect width="88" height="61" fill="#dccbb6"/>
      <g filter="url(#b9)">
        <path d="M0 0 H88 V8 L44 12 L0 9 Z" fill="#9a6a3c"/><path d="M50 1 h38 v5 l-38 3z" fill="#ecc98c"/>
        <path d="M0 10 L44 13 V42 L0 46 Z" fill="#cfdde2"/><path d="M0 24 L44 26 V36 L0 38 Z" fill="#a9c8b4"/>
        <path d="M44 10 H88 V42 H44 Z" fill="#e3d5c4"/>
        <path d="M0 46 L44 41 H88 V61 H0 Z" fill="#c99a5c"/>
        <path d="M0 52 L20 46 L42 61 H0 Z" fill="#8c949c"/><path d="M48 61 L64 50 L88 56 V61 Z" fill="#70767c"/>
      </g>
      <g filter="url(#b5)">
        <path d="M4 0 l6 8 M12 0 l6 8 M20 0 l6 8 M28 0 l6 9 M36 0 l6 9 M44 0 l5 8" stroke="#6e4624" stroke-width="1.200"/>
        <path d="M0 9 L44 12.500 V15 L0 12 Z" fill="#6c5a4a"/>
        <path d="M8 11 v34 M13.500 11.500 v33 M19 12 v32 M25 12.500 v30 M31 13 v29 M36 13 v29 M41 13.500 v28" stroke="#5c5048" stroke-width="1"/>
        <circle cx="48" cy="8" r="3.600" fill="#6c5232"/><circle cx="40" cy="11.500" r="3" fill="#7a5c38"/><circle cx="37" cy="9.500" r="1.800" fill="#6c5232"/>
        <path d="M59 21 h17 v8.500 h-17z" fill="#3a3a42"/>
        <path d="M47 17 h9 v20 h-9z" fill="#b08458"/><path d="M48 19 h7 v4 h-7z M48 25 h7 v4 h-7z M48 31 h7 v4 h-7z" fill="#e6d4b8"/>
        <path d="M82 16 l6 -2 v28 h-6z" fill="#a87a50"/>
        <path d="M17 39 h10 v9 h-10z" fill="#d9b27c"/><path d="M17 39 h10 v3 h-10z" fill="#f0ebe2"/>
        <path d="M29 45 L42 42 L52 46 L38 51 Z" fill="#d6aa6c"/><path d="M33 45 l6 -1.500 l5 2 l-6 2z" fill="#4a4a4e"/><path d="M38 51 L52 46 v3 L38 54 Z" fill="#b88a50"/>
        <path d="M38 34 h8 v7 h-8z M54 38 h9 v8 h-9z" fill="#d4ac74"/>
        <path d="M62 36 L76 33 L82 38 V46 L66 49 Z" fill="#d8b480"/><path d="M64 36 L75 33.500 L79 38 L67 41 Z" fill="#f1ede5"/><path d="M70 40 l8 -2 l2 6 l-8 2z" fill="#efe9df"/>
        <path d="M2 54 l4 -2 l3 5 l-4 2z" fill="#c9a674"/>
      </g>
      <rect x="0" y="30" width="88" height="31" filter="url(#nd)" opacity=".26"/><rect x="0" y="30" width="88" height="31" filter="url(#nl)" opacity=".2"/>
    </svg>
  </div>
  <!-- bottom -->
  <div class="t" style="left:130px;top:467px">文件名(N):</div>
  <div class="a" style="left:192px;top:463px;width:535px;height:25px;border:1px solid #2b7fc3;border-radius:3px;background:#fff"></div>
  <div class="a" style="left:197.500px;top:467px;width:1px;height:16px;background:#000"></div>
  <svg class="a" style="left:714px;top:473px" width="9" height="5" viewBox="0 0 9 5"><path d="M.5 .5 L4.500 4.300 L8.500 .5" fill="none" stroke="#555" stroke-width="1"/></svg>
  <div class="a" style="left:739px;top:463px;width:188px;height:24px;border:1px solid #d6d6d6;border-radius:2px;background:#fafafa;line-height:22px;padding-left:4px">图片文件</div>
  <svg class="a" style="left:913px;top:472px" width="9" height="5" viewBox="0 0 9 5"><path d="M.5 .5 L4.500 4.300 L8.500 .5" fill="none" stroke="#444" stroke-width="1"/></svg>
  <div class="a" style="left:740px;top:494px;width:86px;height:24px;border:1px solid #1e6fb8;border-radius:4px;background:#fafbfc;text-align:center;line-height:22px;box-shadow:inset 0 0 0 .5px #1e6fb8">打开(O)</div>
  <div class="a" style="left:840px;top:494px;width:86px;height:24px;border:1px solid #d8d8d8;border-radius:4px;background:#fdfdfd;text-align:center;line-height:22px">取消</div>
  <svg class="a" style="left:932px;top:520px" width="9" height="9" viewBox="0 0 9 9"><path d="M7 0h2v2H7zM7 3.500h2v2H7zM3.500 3.500h2v2h-2zM7 7h2v2H7zM3.500 7h2v2h-2zM0 7h2v2H0z" fill="#bdbdbd"/></svg>
</div>
<!-- mouse cursor -->
<svg class="a" style="left:759px;top:760px" width="14" height="21" viewBox="0 0 14 21"><path d="M.7 .9 V17 L4.500 13.400 L7.300 19.800 L9.700 18.700 L6.900 12.500 H12 Z" fill="#fff" stroke="#222" stroke-width="1" stroke-linejoin="round"/></svg>
<!-- IME -->
<div class="a" style="left:1716px;top:868px;width:196px;height:25.500px;background:#fff"></div>
<div class="a" style="left:1696px;top:867px;width:26px;height:25px;border-radius:3px;background:#e94f27;transform:rotate(-13deg)"></div>
<div class="a" style="left:1699px;top:862px;width:22px;height:34px;text-align:center;font:italic bold 29px/34px 'Liberation Sans',sans-serif;color:#fff;transform:rotate(-13deg) scale(1.150,.95)">S</div>
<div class="a" style="left:1730px;top:870.500px;font-weight:bold;font-size:15.500px;line-height:22px;color:#1b72d4">中</div>
<svg class="a" style="left:1756px;top:875px" width="13" height="12" viewBox="0 0 13 12"><circle cx="2.600" cy="3" r="1.700" fill="none" stroke="#1b72d4" stroke-width="1.300"/><path d="M8.300 4.500 a1.600 1.600 0 1 1 3.100 .6 q-.4 3 -3 5.500 q1.200 -2.300 1 -4.300 a1.600 1.600 0 0 1 -1.100 -1.800z" fill="#1b72d4"/></svg>
<svg class="a" style="left:1780px;top:873px" width="12" height="16" viewBox="0 0 12 16"><rect x="3.300" y="0" width="5.400" height="9.600" rx="2.700" fill="#1b72d4"/><path d="M.9 7 a5.100 5.100 0 0 0 10.200 0 M6 12.200 V14.500 M4 14.900 H8" fill="none" stroke="#1b72d4" stroke-width="1.300"/></svg>
<svg class="a" style="left:1803px;top:875px" width="15" height="12" viewBox="0 0 15 12"><rect x="0" y="0" width="15" height="12" rx="1.800" fill="#1b72d4"/><path d="M2 2.300h2v2H2zM5 2.300h2v2H5zM8 2.300h2v2H8zM11 2.300h2v2h-2zM2 5.300h2v2H2zM5 5.300h2v2H5zM8 5.300h2v2H8zM11 5.300h2v2h-2zM2.500 8.600h10v1.400h-10z" fill="#fff"/></svg>
<svg class="a" style="left:1827px;top:874px" width="15" height="14" viewBox="0 0 15 14"><path d="M4.300 .3 Q7.500 2.500 10.700 .3 L15 2.600 L13.600 6.400 L11.700 5.800 V13.700 H3.300 V5.800 L1.400 6.400 L0 2.600 Z" fill="#1b72d4"/></svg>
<svg class="a" style="left:1851px;top:874px" width="15" height="14" viewBox="0 0 15 14"><path d="M3.500 .5 H11.500 A3.500 3.500 0 0 1 15 4 V11.500 A1.900 1.900 0 0 1 11.500 12.500 L10.300 10 H4.700 L3.500 12.500 A1.900 1.900 0 0 1 0 11.500 V4 A3.500 3.500 0 0 1 3.500 .5 Z" fill="#1b72d4"/><path d="M2.500 4.800 H6 M4.250 3 V6.600" stroke="#fff" stroke-width="1.100"/><circle cx="10.200" cy="3.800" r=".9" fill="#fff"/><circle cx="12" cy="5.600" r=".9" fill="#fff"/><path d="M1.200 9.600 H13.800" stroke="#fff" stroke-width=".9"/></svg>
<svg class="a" style="left:1876px;top:874px" width="13" height="13" viewBox="0 0 13 13"><rect x="0" y="0" width="5.700" height="5.700" rx="1.300" fill="#1b72d4"/><circle cx="10" cy="2.900" r="2.700" fill="#1b72d4"/><rect x="0" y="7.300" width="5.700" height="5.700" rx="1.300" fill="#1b72d4"/><rect x="7.300" y="7.300" width="5.700" height="5.700" rx="1.300" fill="#1b72d4"/></svg>
<svg class="a" style="left:1898px;top:872px" width="14" height="17" viewBox="0 0 14 17"><circle cx="8.500" cy="9" r="7.200" fill="#fdf6fb" stroke="#c9a8e0" stroke-width=".8"/><path d="M2.500 4.500 L3.500 1.500 L6.500 3 Z M14 3.200 L11 2.800 L12.500 1.200Z" fill="#fdf6fb" stroke="#c9a8e0" stroke-width=".7"/><rect x="3" y="7" width="11" height="4.200" rx="1.600" fill="#e8742a"/><path d="M6 9 h1.500 M10 9 h1.500" stroke="#fff" stroke-width="1"/><path d="M7 11.500 h3 l-1.500 1.500z" fill="#333"/></svg>
</body>
</html>
